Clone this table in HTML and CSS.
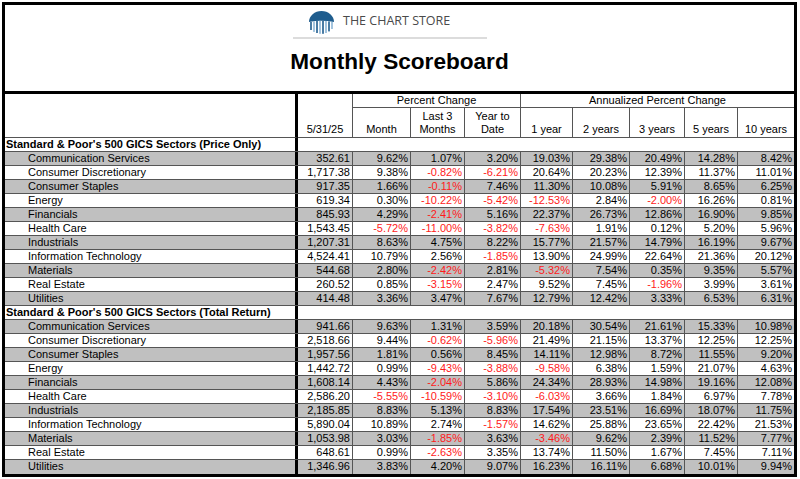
FILE: index.html
```html
<!DOCTYPE html>
<html>
<head>
<meta charset="utf-8">
<link rel="stylesheet" href="styles.css">
</head>
<body>
<div class="board">
  <div class="head">
    <div class="brand">
      <svg class="logo" width="27" height="24" viewBox="0 0 27 24">
        <path d="M1 12 A12.5 11 0 0 1 26 12 Q13.5 9.5 1 12 Z" fill="#1f5d8e"/>
        <rect x="2.2" y="12" width="1.6" height="8" fill="#1f5d8e"/>
        <rect x="5.2" y="11.4" width="1.6" height="10.5" fill="#8db6d6"/>
        <rect x="8.2" y="11" width="1.6" height="12" fill="#1f5d8e"/>
        <rect x="11.2" y="10.8" width="1.6" height="13" fill="#8db6d6"/>
        <rect x="14.2" y="10.8" width="1.6" height="13" fill="#1f5d8e"/>
        <rect x="17.2" y="11" width="1.6" height="12" fill="#8db6d6"/>
        <rect x="20.2" y="11.4" width="1.6" height="10" fill="#1f5d8e"/>
        <rect x="23.2" y="12" width="1.6" height="7" fill="#8db6d6"/>
      </svg>
      <span class="brand-name">THE CHART STORE</span>
    </div>
    <h1 class="title">Monthly Scoreboard</h1>
  </div>

  <div class="thead">
    <div class="hname"></div>
    <div class="hdate">5/31/25</div>
    <div class="hgroup pc">Percent Change</div>
    <div class="hgroup apc">Annualized Percent Change</div>
    <div class="hcol">Month</div>
    <div class="hcol">Last 3<br>Months</div>
    <div class="hcol">Year to<br>Date</div>
    <div class="hcol">1 year</div>
    <div class="hcol">2 years</div>
    <div class="hcol">3 years</div>
    <div class="hcol">5 years</div>
    <div class="hcol last">10 years</div>
  </div>

  <div class="row sec"><div class="name">Standard &amp; Poor's 500 GICS Sectors (Price Only)</div><div class="blank"></div></div>
  <div class="row g"><div class="name ind">Communication Services</div><div class="c">352.61</div><div class="c">9.62%</div><div class="c">1.07%</div><div class="c">3.20%</div><div class="c">19.03%</div><div class="c">29.38%</div><div class="c">20.49%</div><div class="c">14.28%</div><div class="c">8.42%</div></div>
  <div class="row"><div class="name ind">Consumer Discretionary</div><div class="c">1,717.38</div><div class="c">9.38%</div><div class="c neg">-0.82%</div><div class="c neg">-6.21%</div><div class="c">20.64%</div><div class="c">20.23%</div><div class="c">12.39%</div><div class="c">11.37%</div><div class="c">11.01%</div></div>
  <div class="row g"><div class="name ind">Consumer Staples</div><div class="c">917.35</div><div class="c">1.66%</div><div class="c neg">-0.11%</div><div class="c">7.46%</div><div class="c">11.30%</div><div class="c">10.08%</div><div class="c">5.91%</div><div class="c">8.65%</div><div class="c">6.25%</div></div>
  <div class="row"><div class="name ind">Energy</div><div class="c">619.34</div><div class="c">0.30%</div><div class="c neg">-10.22%</div><div class="c neg">-5.42%</div><div class="c neg">-12.53%</div><div class="c">2.84%</div><div class="c neg">-2.00%</div><div class="c">16.26%</div><div class="c">0.81%</div></div>
  <div class="row g"><div class="name ind">Financials</div><div class="c">845.93</div><div class="c">4.29%</div><div class="c neg">-2.41%</div><div class="c">5.16%</div><div class="c">22.37%</div><div class="c">26.73%</div><div class="c">12.86%</div><div class="c">16.90%</div><div class="c">9.85%</div></div>
  <div class="row"><div class="name ind">Health Care</div><div class="c">1,543.45</div><div class="c neg">-5.72%</div><div class="c neg">-11.00%</div><div class="c neg">-3.82%</div><div class="c neg">-7.63%</div><div class="c">1.91%</div><div class="c">0.12%</div><div class="c">5.20%</div><div class="c">5.96%</div></div>
  <div class="row g"><div class="name ind">Industrials</div><div class="c">1,207.31</div><div class="c">8.63%</div><div class="c">4.75%</div><div class="c">8.22%</div><div class="c">15.77%</div><div class="c">21.57%</div><div class="c">14.79%</div><div class="c">16.19%</div><div class="c">9.67%</div></div>
  <div class="row"><div class="name ind">Information Technology</div><div class="c">4,524.41</div><div class="c">10.79%</div><div class="c">2.56%</div><div class="c neg">-1.85%</div><div class="c">13.90%</div><div class="c">24.99%</div><div class="c">22.64%</div><div class="c">21.36%</div><div class="c">20.12%</div></div>
  <div class="row g"><div class="name ind">Materials</div><div class="c">544.68</div><div class="c">2.80%</div><div class="c neg">-2.42%</div><div class="c">2.81%</div><div class="c neg">-5.32%</div><div class="c">7.54%</div><div class="c">0.35%</div><div class="c">9.35%</div><div class="c">5.57%</div></div>
  <div class="row"><div class="name ind">Real Estate</div><div class="c">260.52</div><div class="c">0.85%</div><div class="c neg">-3.15%</div><div class="c">2.47%</div><div class="c">9.52%</div><div class="c">7.45%</div><div class="c neg">-1.96%</div><div class="c">3.99%</div><div class="c">3.61%</div></div>
  <div class="row g"><div class="name ind">Utilities</div><div class="c">414.48</div><div class="c">3.36%</div><div class="c">3.47%</div><div class="c">7.67%</div><div class="c">12.79%</div><div class="c">12.42%</div><div class="c">3.33%</div><div class="c">6.53%</div><div class="c">6.31%</div></div>

  <div class="row sec"><div class="name">Standard &amp; Poor's 500 GICS Sectors (Total Return)</div><div class="blank"></div></div>
  <div class="row g"><div class="name ind">Communication Services</div><div class="c">941.66</div><div class="c">9.63%</div><div class="c">1.31%</div><div class="c">3.59%</div><div class="c">20.18%</div><div class="c">30.54%</div><div class="c">21.61%</div><div class="c">15.33%</div><div class="c">10.98%</div></div>
  <div class="row"><div class="name ind">Consumer Discretionary</div><div class="c">2,518.66</div><div class="c">9.44%</div><div class="c neg">-0.62%</div><div class="c neg">-5.96%</div><div class="c">21.49%</div><div class="c">21.15%</div><div class="c">13.37%</div><div class="c">12.25%</div><div class="c">12.25%</div></div>
  <div class="row g"><div class="name ind">Consumer Staples</div><div class="c">1,957.56</div><div class="c">1.81%</div><div class="c">0.56%</div><div class="c">8.45%</div><div class="c">14.11%</div><div class="c">12.98%</div><div class="c">8.72%</div><div class="c">11.55%</div><div class="c">9.20%</div></div>
  <div class="row"><div class="name ind">Energy</div><div class="c">1,442.72</div><div class="c">0.99%</div><div class="c neg">-9.43%</div><div class="c neg">-3.88%</div><div class="c neg">-9.58%</div><div class="c">6.38%</div><div class="c">1.59%</div><div class="c">21.07%</div><div class="c">4.63%</div></div>
  <div class="row g"><div class="name ind">Financials</div><div class="c">1,608.14</div><div class="c">4.43%</div><div class="c neg">-2.04%</div><div class="c">5.86%</div><div class="c">24.34%</div><div class="c">28.93%</div><div class="c">14.98%</div><div class="c">19.16%</div><div class="c">12.08%</div></div>
  <div class="row"><div class="name ind">Health Care</div><div class="c">2,586.20</div><div class="c neg">-5.55%</div><div class="c neg">-10.59%</div><div class="c neg">-3.10%</div><div class="c neg">-6.03%</div><div class="c">3.66%</div><div class="c">1.84%</div><div class="c">6.97%</div><div class="c">7.78%</div></div>
  <div class="row g"><div class="name ind">Industrials</div><div class="c">2,185.85</div><div class="c">8.83%</div><div class="c">5.13%</div><div class="c">8.83%</div><div class="c">17.54%</div><div class="c">23.51%</div><div class="c">16.69%</div><div class="c">18.07%</div><div class="c">11.75%</div></div>
  <div class="row"><div class="name ind">Information Technology</div><div class="c">5,890.04</div><div class="c">10.89%</div><div class="c">2.74%</div><div class="c neg">-1.57%</div><div class="c">14.62%</div><div class="c">25.88%</div><div class="c">23.65%</div><div class="c">22.42%</div><div class="c">21.53%</div></div>
  <div class="row g"><div class="name ind">Materials</div><div class="c">1,053.98</div><div class="c">3.03%</div><div class="c neg">-1.85%</div><div class="c">3.63%</div><div class="c neg">-3.46%</div><div class="c">9.62%</div><div class="c">2.39%</div><div class="c">11.52%</div><div class="c">7.77%</div></div>
  <div class="row"><div class="name ind">Real Estate</div><div class="c">648.61</div><div class="c">0.99%</div><div class="c neg">-2.63%</div><div class="c">3.35%</div><div class="c">13.74%</div><div class="c">11.50%</div><div class="c">1.67%</div><div class="c">7.45%</div><div class="c">7.11%</div></div>
  <div class="row g end"><div class="name ind">Utilities</div><div class="c">1,346.96</div><div class="c">3.83%</div><div class="c">4.20%</div><div class="c">9.07%</div><div class="c">16.23%</div><div class="c">16.11%</div><div class="c">6.68%</div><div class="c">10.01%</div><div class="c">9.94%</div></div>
</div>
</body>
</html>
```

FILE: styles.css
```css
* {
  box-sizing: border-box;
}

body {
  margin: 0;
  background: #fff;
  color: #000;
  font-family: "Liberation Sans", Arial, sans-serif;
  font-size: 11px;
}

.board {
  margin: 2px 0 0 2px;
  width: 795px;
  border: 3px solid #000;
}

.head {
  height: 89px;
  border-bottom: 3px solid #000;
  display: flex;
  flex-direction: column;
  align-items: center;
}

.brand {
  width: 194px;
  margin-right: 19px;
  margin-top: 5px;
  padding: 0 0 3px 15px;
  display: flex;
  align-items: center;
  gap: 8px;
  border-bottom: 2px solid #dcdcdc;
}

.logo {
  display: block;
}

.brand-name {
  font-family: "Open Sans", "Liberation Sans", sans-serif;
  font-size: 12.5px;
  color: #4a4a4a;
  line-height: 16px;
  margin-top: -3px;
}

.title {
  margin: 10px 0 0 0;
  font-family: "Liberation Sans", Arial, sans-serif;
  font-weight: bold;
  font-size: 22.6px;
  line-height: 26px;
}

.thead,
.row {
  display: grid;
  grid-template-columns: 293px 55px 58px 54px 56px 52px 57px 55px 53px 56px;
}

.thead {
  grid-template-rows: 14px 30px;
  line-height: 13px;
}

.hname {
  grid-row: 1 / 3;
  grid-column: 1;
  border-right: 3px solid #000;
  border-bottom: 1px solid #555;
}

.hdate {
  grid-row: 1 / 3;
  grid-column: 2;
  border-right: 1px solid #555;
  border-bottom: 1px solid #555;
  display: flex;
  align-items: flex-end;
  justify-content: center;
  padding-bottom: 1px;
}

.hgroup {
  grid-row: 1;
  text-align: center;
  border-bottom: 1px solid #555;
  line-height: 13px;
}

.pc {
  grid-column: 3 / 6;
  border-right: 1px solid #555;
}

.apc {
  grid-column: 6 / 11;
}

.hcol {
  grid-row: 2;
  border-right: 1px solid #555;
  border-bottom: 1px solid #555;
  display: flex;
  align-items: flex-end;
  justify-content: center;
  text-align: center;
  padding-bottom: 1px;
}

.hcol.last {
  border-right: none;
}

.row {
  height: 14px;
  border-bottom: 1px solid #555;
  line-height: 13px;
}

.row.end {
  border-bottom: none;
}

.g {
  background: #c0c0c0;
}

.name {
  border-right: 3px solid #000;
  padding-left: 1px;
  white-space: nowrap;
}

.sec .name {
  font-weight: bold;
  background: #fff;
}

.sec .blank {
  grid-column: 2 / 11;
}

.name.ind {
  padding-left: 23px;
}

.c {
  text-align: right;
  padding-right: 2px;
  border-right: 1px solid #555;
  white-space: nowrap;
}

.c:last-child {
  border-right: none;
}

.neg {
  color: #ff1a1a;
}
```
